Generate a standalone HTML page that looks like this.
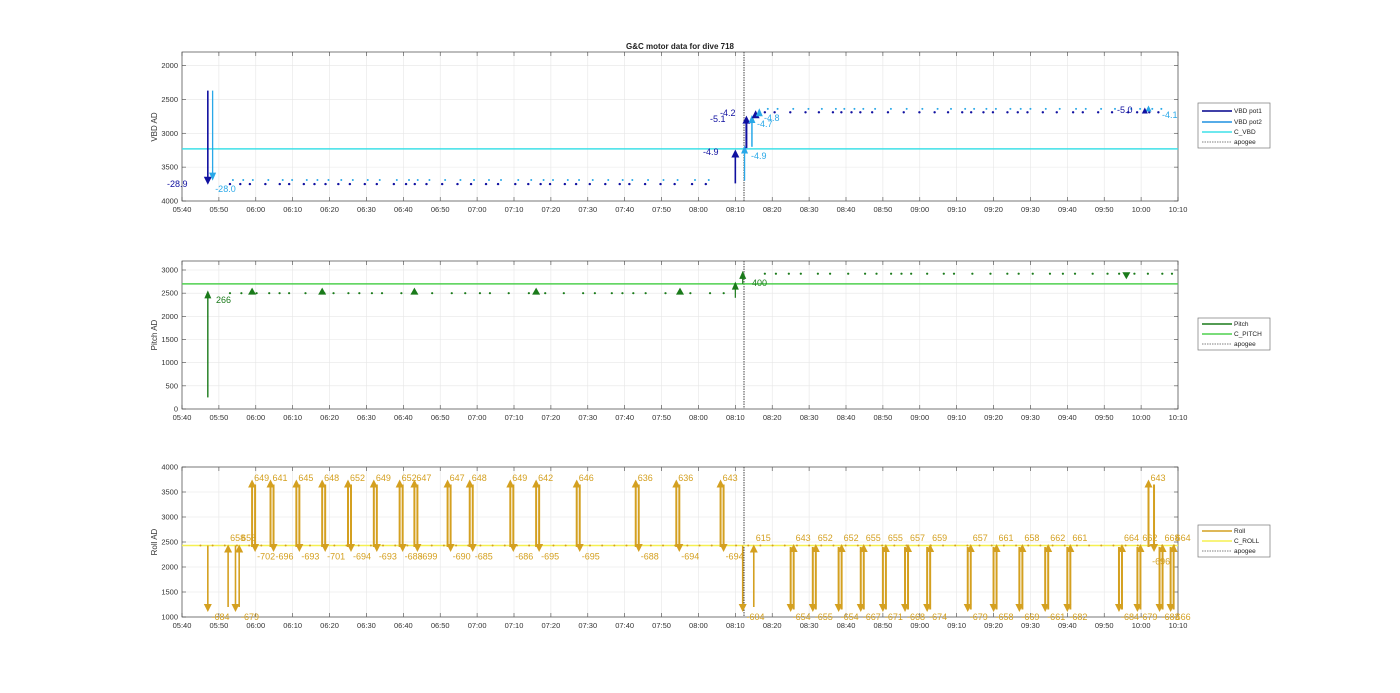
<!DOCTYPE html>
<html><head><meta charset="utf-8"><style>
html,body{margin:0;padding:0;background:#fff;}
svg{display:block;font-family:"Liberation Sans",Arial,sans-serif;}
</style></head><body>
<svg id="s" width="1400" height="693" viewBox="0 0 1400 693" xmlns="http://www.w3.org/2000/svg">
<rect width="1400" height="693" fill="#fff"/>
<text x="680" y="49" font-size="8" font-weight="bold" text-anchor="middle" fill="#222">G&amp;C motor data for dive 718</text>
<text transform="translate(157,127) rotate(-90)" font-size="8" text-anchor="middle" fill="#333">VBD AD</text>
<text transform="translate(157,335) rotate(-90)" font-size="8" text-anchor="middle" fill="#333">Pitch AD</text>
<text transform="translate(157,542) rotate(-90)" font-size="8" text-anchor="middle" fill="#333">Roll AD</text>
<g id="g"></g>
<rect x="1198" y="103" width="72" height="45" fill="#fff" stroke="#777" stroke-width="0.7"/>
<line x1="1202" y1="111" x2="1232" y2="111" stroke="#00008b" stroke-width="1.5"/><text x="1234" y="113" font-size="6.5" fill="#222">VBD pot1</text>
<line x1="1202" y1="122" x2="1232" y2="122" stroke="#1e90e0" stroke-width="1.5"/><text x="1234" y="124" font-size="6.5" fill="#222">VBD pot2</text>
<line x1="1202" y1="132" x2="1232" y2="132" stroke="#3fe0e8" stroke-width="1.5"/><text x="1234" y="134" font-size="6.5" fill="#222">C_VBD</text>
<line x1="1202" y1="142" x2="1232" y2="142" stroke="#555" stroke-width="0.8" stroke-dasharray="1.5,1"/><text x="1234" y="144" font-size="6.5" fill="#222">apogee</text>
<rect x="1198" y="318" width="72" height="32" fill="#fff" stroke="#777" stroke-width="0.7"/>
<line x1="1202" y1="324" x2="1232" y2="324" stroke="#1a7a1a" stroke-width="1.5"/><text x="1234" y="326" font-size="6.5" fill="#222">Pitch</text>
<line x1="1202" y1="334" x2="1232" y2="334" stroke="#4fd04f" stroke-width="1.5"/><text x="1234" y="336" font-size="6.5" fill="#222">C_PITCH</text>
<line x1="1202" y1="344" x2="1232" y2="344" stroke="#555" stroke-width="0.8" stroke-dasharray="1.5,1"/><text x="1234" y="346" font-size="6.5" fill="#222">apogee</text>
<rect x="1198" y="525" width="72" height="32" fill="#fff" stroke="#777" stroke-width="0.7"/>
<line x1="1202" y1="531" x2="1232" y2="531" stroke="#d4a020" stroke-width="1.5"/><text x="1234" y="533" font-size="6.5" fill="#222">Roll</text>
<line x1="1202" y1="541" x2="1232" y2="541" stroke="#f5f050" stroke-width="1.5"/><text x="1234" y="543" font-size="6.5" fill="#222">C_ROLL</text>
<line x1="1202" y1="551" x2="1232" y2="551" stroke="#555" stroke-width="0.8" stroke-dasharray="1.5,1"/><text x="1234" y="553" font-size="6.5" fill="#222">apogee</text>
</svg>
<script>
var G=document.getElementById("g"),out="";
function X(m){return 182+m*996/270;}
function Y1(v){return 52+(v-1800)*149/2200;}
function Y2(v){return 409-v*139/3000;}
function Y3(v){return 617-(v-1000)*150/3000;}
var labs=["05:40","05:50","06:00","06:10","06:20","06:30","06:40","06:50","07:00","07:10","07:20","07:30","07:40","07:50","08:00","08:10","08:20","08:30","08:40","08:50","09:00","09:10","09:20","09:30","09:40","09:50","10:00","10:10"];
function L(x1,y1,x2,y2,c,w,extra){out+='<line x1="'+x1+'" y1="'+y1+'" x2="'+x2+'" y2="'+y2+'" stroke="'+c+'" stroke-width="'+w+'" '+(extra||'')+'/>';}
function T(x,y,s,c,sz,anc){out+='<text x="'+x+'" y="'+y+'" font-size="'+(sz||7)+'" fill="'+c+'"'+(anc?' text-anchor="'+anc+'"':'')+'>'+s+'</text>';}
function tri(x,y,up,c,w,h){w=w||4;h=h||8;var b=up?y+h:y-h;out+='<polygon points="'+(x-w)+','+b+' '+x+','+y+' '+(x+w)+','+b+'" fill="'+c+'"/>';}
function arrow(x,ya,yb,c,lw,hw){var up=yb<ya;L(x,ya,x,up?yb+6:yb-6,c,lw);tri(x,yb,up,c,hw||4,8);}
function dot(x,y,c,r){out+='<circle cx="'+x+'" cy="'+y+'" r="'+(r||1.2)+'" fill="'+c+'"/>';}
function axes(top,bot,yt){
 for(var i=0;i<28;i++){var x=X(i*10);L(x,top,x,bot,"#e6e6e6",0.6);L(x,top,x,top+4,"#444",0.6);L(x,bot,x,bot-4,"#444",0.6);T(x,bot+11,labs[i],"#333",7.5,"middle");}
 yt.forEach(function(t){L(182,t[0],1178,t[0],"#e6e6e6",0.6);L(182,t[0],186,t[0],"#444",0.6);L(1178,t[0],1174,t[0],"#444",0.6);T(178,t[0]+2.5,t[1],"#333",7.5,"end");});
 out+='<rect x="182" y="'+top+'" width="996" height="'+(bot-top)+'" fill="none" stroke="#444" stroke-width="0.7"/>';
 L(744,top,744,bot,"#444",1,'stroke-dasharray="1.5,1"');
}
axes(52,201,[[2000,"2000"],[2500,"2500"],[3000,"3000"],[3500,"3500"],[4000,"4000"]].map(function(a){return [Y1(a[0]),a[1]];}));
L(182,Y1(3230),1178,Y1(3230),"#3fe0e8",1.5);
var DB="#1010a0",LB="#29a8e8";
for(var m=13;m<146;m+=2.3+((m*7)%5)*0.5){dot(X(m),Y1(3750),DB);dot(X(m+0.8),Y1(3690),LB,1);}
for(var m=158;m<268;m+=2.2+((m*7)%5)*0.45){dot(X(m),Y1(2690),DB);dot(X(m+0.8),Y1(2640),LB,1);}
arrow(X(7),Y1(2370),Y1(3760),DB,1.6,4);arrow(X(8.3),Y1(2370),Y1(3700),LB,1.3,3.5);
T(167,187,"-28.9",DB,9);T(X(9),192,"-28.0",LB,9);
arrow(X(150),Y1(3740),Y1(3240),DB,1.6,4);T(703,155,"-4.9",DB,9);
arrow(X(152.5),Y1(3700),Y1(3180),LB,1.3,3.5);T(751,159,"-4.9",LB,9);
arrow(X(153),Y1(3220),Y1(2740),DB,2,4);T(710,122,"-5.1",DB,9);T(720,116,"-4.2",DB,9);
arrow(X(154.5),Y1(3200),Y1(2730),LB,1.5,3.5);
arrow(X(155.5),Y1(2740),Y1(2660),DB,1.6,4);arrow(X(156.5),Y1(2700),Y1(2630),LB,1.3,3.5);
T(757,127,"-4.7",LB,9);T(764,121,"-4.8",LB,9);
T(1117,113,"-5.0",DB,9);tri(X(262),Y1(2590),true,LB,3,6);tri(X(261),Y1(2620),true,DB,3,6);T(1162,118,"-4.1",LB,9);
axes(261,409,[0,500,1000,1500,2000,2500,3000].map(function(v){return [Y2(v),""+v];}));
L(182,Y2(2700),1178,Y2(2700),"#4fd04f",1.5);
var GR="#1a7a1a";
for(var m=13;m<148;m+=2.5+((m*7)%5)*0.6){dot(X(m),Y2(2500),GR,1.1);}
for(var m=158;m<270;m+=2.5+((m*7)%5)*0.5){dot(X(m),Y2(2920),GR,1.1);}
arrow(X(7),Y2(250),Y2(2560),GR,1.4,3.5);T(216,303,"266",GR,9);
[19,38,63,96,135].forEach(function(m){tri(X(m),Y2(2620),true,GR,4,7);});
arrow(X(150),Y2(2400),Y2(2750),GR,1.2,3.5);arrow(X(152),Y2(2700),Y2(2980),GR,1.2,3.5);T(752,286,"400",GR,9);
tri(X(256),Y2(2800),false,GR,4,7);
axes(467,617,[1000,1500,2000,2500,3000,3500,4000].map(function(v){return [Y3(v),""+v];}));
L(182,Y3(2430),1178,Y3(2430),"#f5f050",1.5);
var GO="#d4a020";
for(var m=5;m<270;m+=3.3){dot(X(m),Y3(2430),GO,1);}
var pre=[19,24,31,38,45,52,59,63,72,78,89,96,107,123,134,146];
var up1=["649","641","645","648","652","649","652","647","647","648","649","642","646","636","636","643"];
var dn1=["-702","-696","-693","-701","-694","-693","-688","-699","-690","-685","-686","-695","-695","-688","-694","-694"];
pre.forEach(function(m,i){var x=X(m);arrow(x,Y3(2400),Y3(3750),GO,2,4);arrow(x+3,Y3(3650),Y3(2300),GO,2,4);T(x+2,481,up1[i],GO,9);T(x+5,Y3(2150),dn1[i],GO,9);});
arrow(X(7),Y3(2430),Y3(1100),GO,1.6,4);T(X(8),620,"-684",GO,9);
arrow(X(12.5),Y3(1200),Y3(2450),GO,1.6,4);T(X(12.5)+2,Y3(2520),"658",GO,9);
arrow(X(14.5),Y3(2430),Y3(1100),GO,1.6,4);arrow(X(15.5),Y3(1200),Y3(2450),GO,1.6,4);T(X(15.5)+2,Y3(2520),"658",GO,9);T(X(16),620,"-679",GO,9);
arrow(X(152),Y3(2430),Y3(1100),GO,1.6,4);T(X(152.5)+2,620,"-604",GO,9);
arrow(X(155),Y3(1200),Y3(2450),GO,1.6,4);T(X(155)+2,Y3(2520),"615",GO,9);
var post=[165,171,178,184,190,196,202,213,220,227,234,240,254,259,265,268];
var up2=["643","652","652","655","655","657","659","657","661","658","662","661","664","662","668","664"];
var dn2=["-654","-655","-654","-667","-671","-668","-674","-679","-658","-669","-661","-682","-684","-679","-683","-666"];
post.forEach(function(m,i){var x=X(m);arrow(x,Y3(2400),Y3(1100),GO,2,4);arrow(x+3,Y3(1150),Y3(2460),GO,2,4);T(x+5,Y3(2520),up2[i],GO,9);T(x+2,620,dn2[i],GO,9);});
arrow(X(262),Y3(2400),Y3(3750),GO,2,4);arrow(X(263.5),Y3(3650),Y3(2300),GO,2,4);T(X(262)+2,481,"643",GO,9);T(X(263),Y3(2050),"-696",GO,9);
G.innerHTML=out;
</script>
</body></html>
